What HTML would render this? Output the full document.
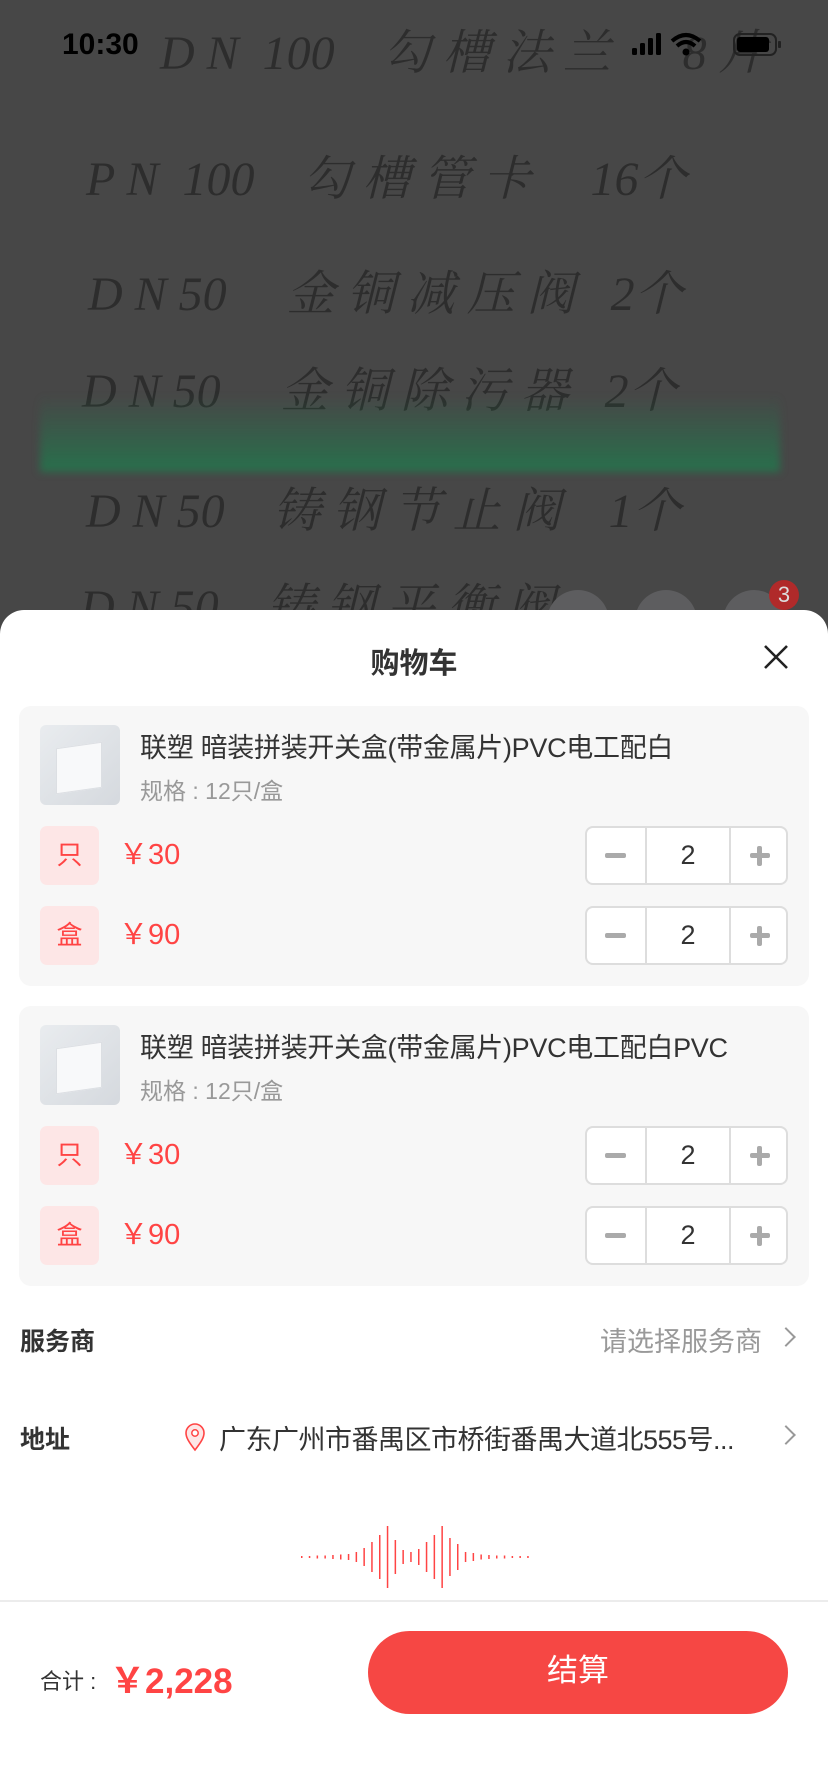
<!DOCTYPE html>
<html><head><meta charset="utf-8"><style>
*{margin:0;padding:0;box-sizing:border-box}
body{width:828px;height:1792px;position:relative;overflow:hidden;background:#474747;font-family:"Liberation Sans","Noto Sans CJK SC",sans-serif}
.hw{position:absolute;color:#1c1c1c;font-family:"Liberation Serif","Noto Serif CJK SC",serif;font-size:48px;opacity:.6;white-space:pre;font-style:italic}
.green{position:absolute;left:40px;width:740px;top:395px;height:77px;background:linear-gradient(180deg,rgba(20,140,80,0),rgba(20,140,80,.6));filter:blur(4px)}
.status{position:absolute;top:28px;left:62px;font-weight:bold;font-size:30px;color:#000}
.circ{position:absolute;top:590px;width:62px;height:62px;border-radius:50%;background:#5d5d5f}
.sheet{position:absolute;left:0;top:610px;width:828px;height:1182px;background:#fff;border-radius:24px 24px 0 0}
.a{position:absolute}
.card{position:absolute;left:19px;width:790px;height:280px;background:#f7f7f7;border-radius:12px}
.img{position:absolute;left:21px;top:19px;width:80px;height:80px;border-radius:6px;background:linear-gradient(135deg,#e9ecef,#d5d9de)}
.img i{position:absolute;left:16px;top:20px;width:46px;height:46px;background:#f8f9fa;border:1px solid #dcdfe3;transform:skewY(-8deg)}
.t{position:absolute;left:121px;top:20px;font-size:27px;color:#333;white-space:nowrap;letter-spacing:-0.3px}
.spec{position:absolute;left:121px;top:66px;font-size:23px;color:#999}
.badge{position:absolute;left:21px;width:59px;height:59px;border-radius:7px;background:#fde6e6;color:#f44;font-size:26px;text-align:center;line-height:59px}
.price{position:absolute;left:100px;font-size:29px;color:#f44;line-height:59px}
.step{position:absolute;left:566px;width:203px;height:59px;border:2px solid #ddd;border-radius:8px;background:#fff}
.step .m{position:absolute;left:58px;top:0;width:86px;height:55px;border-left:2px solid #ddd;border-right:2px solid #ddd;text-align:center;line-height:55px;font-size:27px;color:#333}
.step .mi{position:absolute;left:18px;top:25px;width:21px;height:5px;background:#aaa;border-radius:2px}
.step .pl{position:absolute;left:163px;top:25px;width:20px;height:5px;background:#aaa;border-radius:2px}
.step .pl2{position:absolute;left:170px;top:18px;width:5px;height:20px;background:#aaa;border-radius:2px}
.lab{position:absolute;left:20px;font-size:25px;font-weight:bold;color:#333}
.chev{position:absolute;width:14px;height:14px;border-top:2px solid #999;border-right:2px solid #999;transform:rotate(45deg)}
</style></head><body>
<div class="hw" style="left:160px;top:14px">D N  100    勾 槽 法 兰      8 片</div>
<div class="hw" style="left:86px;top:140px">P N  100    勾 槽 管 卡     16个</div>
<div class="hw" style="left:88px;top:255px">D N 50     金 铜 减 压 阀   2个</div>
<div class="hw" style="left:82px;top:352px">D N 50     金 铜 除 污 器   2个</div>
<div class="green"></div>
<div class="hw" style="left:86px;top:472px">D N 50    铸 钢 节 止 阀    1个</div>
<div class="hw" style="left:80px;top:568px">D N 50    铸 钢 平 衡 阀</div>
<div class="status">10:30</div>
<svg class="a" style="left:630px;top:30px" width="160" height="30" viewBox="0 0 160 30">
<rect x="2" y="18" width="5" height="7" rx="1.5" fill="#000"/><rect x="10" y="13" width="5" height="12" rx="1.5" fill="#000"/><rect x="18" y="8" width="5" height="17" rx="1.5" fill="#000"/><rect x="26" y="3" width="5" height="22" rx="1.5" fill="#000"/>
<path d="M42 11 Q56 -1 70 11" stroke="#000" stroke-width="4" fill="none"/><path d="M47 16 Q56 8 65 16" stroke="#000" stroke-width="4" fill="none"/><circle cx="56" cy="22" r="3.5" fill="#000"/>
<rect x="104" y="4" width="42" height="21" rx="6" fill="none" stroke="#222" stroke-width="2"/><rect x="107" y="7" width="32" height="15" rx="3" fill="#000"/><rect x="148" y="11" width="3" height="7" rx="1" fill="#222"/></svg>
<div class="circ" style="left:547px"></div><div class="circ" style="left:635px"></div><div class="circ" style="left:723px"></div>
<div class="a" style="left:769px;top:580px;width:30px;height:30px;border-radius:50%;background:#b02a2a;color:#ddd;font-size:22px;text-align:center;line-height:30px">3</div>

<div class="sheet">
<div class="a" style="left:0;width:828px;top:30px;text-align:center;font-size:29px;font-weight:bold;color:#333">购物车</div>
<svg class="a" style="left:763px;top:34px" width="26" height="26"><path d="M2 2L24 24M24 2L2 24" stroke="#222" stroke-width="2.6"/></svg>

<div class="card" style="top:96px">
<div class="img"><i></i></div>
<div class="t">联塑 暗装拼装开关盒(带金属片)PVC电工配白</div>
<div class="spec">规格 : 12只/盒</div>
<div class="badge" style="top:120px">只</div><div class="price" style="top:120px">￥30</div>
<div class="step" style="top:120px"><div class="mi"></div><div class="m">2</div><div class="pl"></div><div class="pl2"></div></div>
<div class="badge" style="top:200px">盒</div><div class="price" style="top:200px">￥90</div>
<div class="step" style="top:200px"><div class="mi"></div><div class="m">2</div><div class="pl"></div><div class="pl2"></div></div>
</div>

<div class="card" style="top:396px">
<div class="img"><i></i></div>
<div class="t">联塑 暗装拼装开关盒(带金属片)PVC电工配白PVC</div>
<div class="spec">规格 : 12只/盒</div>
<div class="badge" style="top:120px">只</div><div class="price" style="top:120px">￥30</div>
<div class="step" style="top:120px"><div class="mi"></div><div class="m">2</div><div class="pl"></div><div class="pl2"></div></div>
<div class="badge" style="top:200px">盒</div><div class="price" style="top:200px">￥90</div>
<div class="step" style="top:200px"><div class="mi"></div><div class="m">2</div><div class="pl"></div><div class="pl2"></div></div>
</div>

<div class="lab" style="top:712px">服务商</div>
<div class="a" style="left:600px;top:710px;font-size:27px;color:#999">请选择服务商</div>
<div class="chev" style="left:779px;top:720px"></div>

<div class="lab" style="top:810px">地址</div>
<svg class="a" style="left:184px;top:812px" width="22" height="30" viewBox="0 0 22 30"><path d="M11 28C4 19 2 15 2 11A9 9 0 0 1 20 11C20 15 18 19 11 28Z" fill="#fde6e6" stroke="#f44" stroke-width="1.6"/><circle cx="11" cy="11" r="3.2" fill="#fff" stroke="#f44" stroke-width="1.5"/></svg>
<div class="a" style="left:219px;top:808px;font-size:27px;color:#333;white-space:nowrap;letter-spacing:-0.5px">广东广州市番禺区市桥街番禺大道北555号...</div>
<div class="chev" style="left:779px;top:818px"></div>

<svg class="a" style="left:298px;top:914px" width="236" height="66" viewBox="0 0 236 66" id="wave"></svg>

<div class="a" style="left:0;top:990px;width:828px;height:2px;background:#ececec"></div>
<div class="a" style="left:40px;top:1054px;font-size:22px;color:#333">合计 :</div>
<div class="a" style="left:110px;top:1043px;font-size:35px;font-weight:bold;color:#f44">￥2,228</div>
<div class="a" style="left:368px;top:1021px;width:420px;height:83px;border-radius:42px;background:#f64744;color:#fff;font-size:31px;text-align:center;line-height:80px">结算</div>
</div>
<script>
var h=[2,2,3,3,4,5,6,10,18,30,44,62,34,14,10,16,30,44,62,38,26,10,8,5,4,3,3,2,2,2];
var s='';for(var i=0;i<h.length;i++){var x=3+i*7.8;s+='<rect x="'+x.toFixed(1)+'" y="'+(33-h[i]/2)+'" width="1.5" height="'+h[i]+'" fill="#f44"/>';}
document.getElementById('wave').innerHTML=s;
</script>
</body></html>
